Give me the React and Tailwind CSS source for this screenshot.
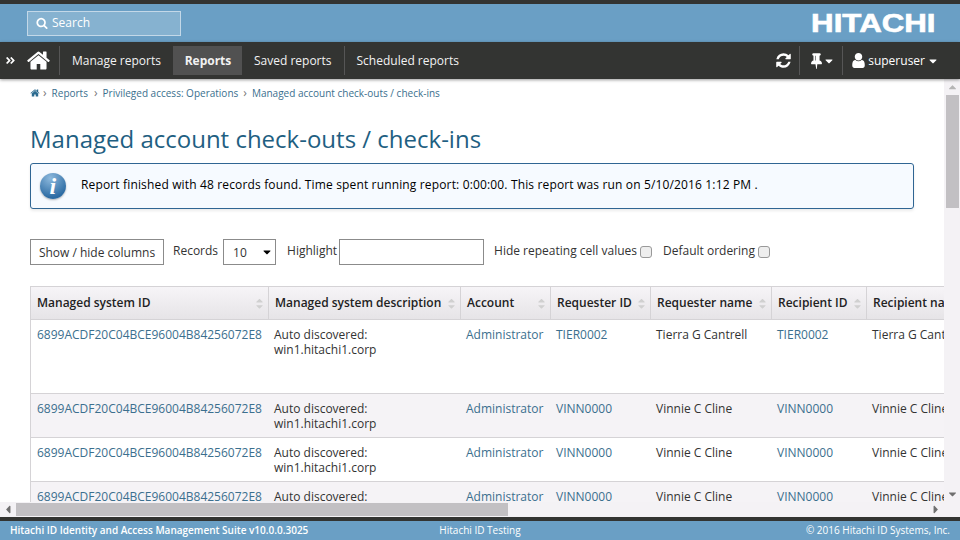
import { FaCaretDown, FaCaretUp, FaCaretLeft, FaCaretRight, FaAngleDoubleRight } from 'react-icons/fa';

const COLS = [
  { label: 'Managed system ID', w: 'w-[238px]' },
  { label: 'Managed system description', w: 'w-[192px]' },
  { label: 'Account', w: 'w-[90px]' },
  { label: 'Requester ID', w: 'w-[100px]' },
  { label: 'Requester name', w: 'w-[121px]' },
  { label: 'Recipient ID', w: 'w-[95px]' },
  { label: 'Recipient name', w: 'w-[120px]' },
];

const ROWS = [
  { id: 'TIER0002', name: 'Tierra G Cantrell', h: 'h-[74px]', bg: 'bg-white' },
  { id: 'VINN0000', name: 'Vinnie C Cline', h: 'h-[44px]', bg: 'bg-[#f5f3f6]' },
  { id: 'VINN0000', name: 'Vinnie C Cline', h: 'h-[44px]', bg: 'bg-white' },
  { id: 'VINN0000', name: 'Vinnie C Cline', h: 'h-[44px]', bg: 'bg-[#f5f3f6]' },
];

// font awesome 4 glyphs, the package only has the newer shapes
const HomeIcon = ({ className }) => (
  <svg viewBox="0 0 1792 1792" fill="currentColor" className={className}>
    <path d="M1472 992v480q0 26-19 45t-45 19h-384v-384h-256v384h-384q-26 0-45-19t-19-45v-480q0-1 .5-3t.5-3l575-474 575 474q1 2 1 6zm223-69l-62 74q-8 9-21 11h-3q-13 0-21-7l-692-577-692 577q-12 8-24 7-13-2-21-11l-62-74q-8-10-7-23.500t11-21.500l719-599q32-26 76-26t76 26l244 204v-195q0-14 9-23t23-9h192q14 0 23 9t9 23v408l219 182q10 8 11 21.500t-7 23.500z" />
  </svg>
);

const RefreshIcon = ({ className }) => (
  <svg viewBox="0 0 1792 1792" fill="currentColor" className={className}>
    <path d="M1639 1056q0 5-1 7-64 268-268 434.500t-478 166.500q-146 0-282.500-55t-243.500-157l-129 129q-19 19-45 19t-45-19-19-45v-448q0-26 19-45t45-19h448q26 0 45 19t19 45-19 45l-137 137q71 66 161 102t187 36q134 0 250-65t186-179q11-17 53-117 8-23 30-23h192q13 0 22.500 9.500t9.500 22.500zm25-800v448q0 26-19 45t-45 19h-448q-26 0-45-19t-19-45 19-45l138-138q-148-137-349-137-134 0-250 65t-186 179q-11 17-53 117-8 23-30 23h-199q-13 0-22.500-9.500t-9.500-22.500v-7q65-268 270-434.500t480-166.500q146 0 284 55.500t245 156.500l130-129q19-19 45-19t45 19 19 45z" />
  </svg>
);

const PinIcon = ({ className }) => (
  <svg viewBox="0 0 1152 1792" fill="currentColor" className={className}>
    <path d="M480 864v-448q0-14-9-23t-23-9-23 9-9 23v448q0 14 9 23t23 9 23-9 9-23zm672 352q0 26-19 45t-45 19h-429l-51 483q-2 12-10.500 20.500t-20.500 8.500h-1q-27 0-32-27l-76-485h-404q-26 0-45-19t-19-45q0-123 78.500-221.500t177.500-98.500v-512q-52 0-90-38t-38-90 38-90 90-38h640q52 0 90 38t38 90-38 90-90 38v512q99 0 177.500 98.500t78.500 221.500z" />
  </svg>
);

const UserIcon = ({ className }) => (
  <svg viewBox="256 128 1280 1536" fill="currentColor" className={className}>
    <path d="M1536 1399q0 109-62.500 187t-150.500 78h-854q-88 0-150.500-78t-62.500-187q0-85 8.500-160.500t31.500-152 58.500-131 94-89 134.500-34.500q131 128 313 128t313-128q76 0 134.500 34.500t94 89 58.500 131 31.500 152 8.500 160.500zm-256-887q0 159-112.500 271.500t-271.500 112.500-271.500-112.500-112.500-271.500 112.500-271.500 271.500-112.500 271.500 112.500 112.500 271.500z" />
  </svg>
);

const SearchIcon = ({ className }) => (
  <svg viewBox="0 0 1792 1792" fill="currentColor" className={className}>
    <path d="M1216 832q0-185-131.500-316.500t-316.500-131.500-316.500 131.500-131.500 316.500 131.500 316.500 316.500 131.500 316.500-131.500 131.500-316.500zm512 832q0 52-38 90t-90 38q-54 0-90-38l-343-342q-179 124-399 124-143 0-273.500-55.500t-225-150-150-225-55.500-273.500 55.500-273.500 150-225 225-150 273.500-55.500 273.500 55.500 225 150 150 225 55.500 273.500q0 220-124 399l343 343q37 37 37 90z" />
  </svg>
);

const Link = ({ children }) => <span className="text-[#3b6f8e]">{children}</span>;

const Divider = () => <div className="h-[29px] w-px bg-[#565656]" />;

const Crumb = ({ children }) => (
  <>
    <span className="mx-[5px] text-[12px] leading-none text-[#777]">›</span>
    <Link>{children}</Link>
  </>
);

const App = () => {
  return (
    <div className="flex h-[540px] w-[960px] flex-col overflow-hidden bg-white font-['Open_Sans',sans-serif] text-[13px] text-[#333]">
      {/* header */}
      <div className="flex h-[42px] shrink-0 items-center justify-between border-t-4 border-[#333432] bg-[#6a9fc5] pl-[27px] pr-[24px]">
        <div className="flex h-[25px] w-[154px] items-center gap-[4px] border border-[#c3d8e8] bg-[#86b2d0] pl-[8px] text-[12px] text-white">
          <SearchIcon className="h-[12px] w-[12px]" />
          <span>Search</span>
        </div>
        <span className="origin-right scale-x-[1.25] font-['Liberation_Sans',sans-serif] text-[25px] font-bold leading-none text-white [-webkit-text-stroke:0.6px_white]">HITACHI</span>
      </div>

      {/* nav */}
      <div className="z-10 flex h-[37px] shrink-0 items-center justify-between bg-[#333432] text-[12px] text-[#f2f2f2] shadow-[0_1px_3px_rgba(0,0,0,0.4)]">
        <div className="flex items-center">
          <FaAngleDoubleRight className="ml-[5px] text-[11px] text-white" />
          <HomeIcon className="ml-[10px] mr-[8px] h-[25px] w-[25px] text-white" />
          <Divider />
          <div className="flex h-[29px] items-center px-3">Manage reports</div>
          <div className="flex h-[29px] w-[69px] items-center justify-center bg-[#515151] pl-[1px] font-bold">Reports</div>
          <div className="flex h-[29px] items-center px-3">Saved reports</div>
          <Divider />
          <div className="flex h-[29px] items-center px-3">Scheduled reports</div>
        </div>
        <div className="flex items-center pr-[21px] text-white">
          <RefreshIcon className="mr-[7px] h-[17px] w-[17px]" />
          <Divider />
          <div className="ml-[11px] mr-[7px] flex items-center gap-[1px]">
            <PinIcon className="h-[17px] w-[11px]" />
            <FaCaretDown className="text-[12px]" />
          </div>
          <Divider />
          <div className="ml-[9px] flex items-center gap-[3px]">
            <UserIcon className="h-[15px] w-[13px]" />
            <span>superuser</span>
            <FaCaretDown className="ml-[-1px] text-[12px]" />
          </div>
        </div>
      </div>

      {/* page */}
      <div className="flex min-h-0 flex-1 flex-col">
        <div className="flex min-h-0 flex-1">
          <div className="min-w-0 flex-1 overflow-hidden pl-[30px]">
            <div className="mt-[6px] flex h-[16px] items-center text-[10px]">
              <HomeIcon className="mr-[-2px] h-[10px] w-[10px] text-[#2a6a8f]" />
              <Crumb>Reports</Crumb>
              <span className="ml-[1px]" />
              <Crumb>Privileged access: Operations</Crumb>
              <Crumb>Managed account check-outs / check-ins</Crumb>
            </div>

            <h1 className="mt-[21px] text-[24px] leading-[34px] text-[#1f5f82]">Managed account check-outs / check-ins</h1>

            <div className="mt-[7px] flex h-[46px] w-[884px] items-center rounded-[3px] border border-[#2f6593] bg-[#f6faff] pl-[9px] text-[12px] tracking-[0.15px] text-black shadow-[0_2px_3px_rgba(0,0,0,0.08)]">
              <div className="flex h-[26px] w-[26px] items-center justify-center rounded-full bg-[radial-gradient(circle_at_40%_20%,#8db9dd,#2c6ba3_75%)] shadow-[0_1px_2px_rgba(0,0,0,0.3)]">
                <span className="font-['Liberation_Serif',serif] text-[24px] font-bold italic leading-none text-white">i</span>
              </div>
              <span className="mb-[2px] ml-[15px]">Report finished with 48 records found. Time spent running report: 0:00:00. This report was run on 5/10/2016 1:12 PM .</span>
            </div>

            <div className="mt-[30px] flex h-[26px] items-center text-[12px]">
              <div className="flex h-[26px] w-[134px] items-center justify-center border border-[#8b8b8b] pt-[1px]">Show / hide columns</div>
              <span className="ml-[9px] mb-[3px]">Records</span>
              <div className="ml-[5px] flex h-[26px] w-[53px] items-center justify-between border border-[#8b8b8b] pl-[9px] pr-[2px]">
                <span className="pt-[2px]">10</span>
                <FaCaretDown className="text-[12px] text-black" />
              </div>
              <span className="ml-[11px] mb-[3px]">Highlight</span>
              <div className="ml-[2px] h-[26px] w-[145px] border border-[#8b8b8b]" />
              <span className="ml-[10px] mb-[3px]">Hide repeating cell values</span>
              <div className="ml-[3px] h-[12px] w-[12px] rounded-[3px] border border-[#999] bg-[#eee]" />
              <span className="ml-[11px] mb-[3px]">Default ordering</span>
              <div className="ml-[3px] h-[12px] w-[12px] rounded-[3px] border border-[#999] bg-[#eee]" />
            </div>

            <div className="mt-[21px] w-[960px] border-l border-[#d5d3d6] text-[12px]">
              <div className="flex h-[34px] border-y border-[#d5d3d6] bg-gradient-to-b from-[#f6f4f7] to-[#e6e4e7] font-semibold text-[#222]">
                {COLS.map((c) => (
                  <div key={c.label} className={`flex ${c.w} shrink-0 items-center justify-between whitespace-nowrap border-r border-[#d5d3d6] pl-[6px] pr-[3px]`}>
                    <span>{c.label}</span>
                    <span className="flex flex-col text-[#d0d0d0]">
                      <FaCaretUp className="mb-[-5px] text-[11px]" />
                      <FaCaretDown className="text-[11px]" />
                    </span>
                  </div>
                ))}
              </div>
              {ROWS.map((r, i) => (
                <div key={i} className={`flex ${r.h} ${r.bg} border-b border-[#d5d3d6] pt-[7px] leading-[15px]`}>
                  <div className="w-[238px] shrink-0 pl-[6px]"><Link>6899ACDF20C04BCE96004B84256072E8</Link></div>
                  <div className="w-[192px] shrink-0 pl-[5px]">Auto discovered:<br />win1.hitachi1.corp</div>
                  <div className="w-[90px] shrink-0 pl-[5px]"><Link>Administrator</Link></div>
                  <div className="w-[100px] shrink-0 pl-[5px]"><Link>{r.id}</Link></div>
                  <div className="w-[121px] shrink-0 pl-[5px]">{r.name}</div>
                  <div className="w-[95px] shrink-0 pl-[5px]"><Link>{r.id}</Link></div>
                  <div className="w-[120px] shrink-0 whitespace-nowrap pl-[5px]">{r.name}</div>
                </div>
              ))}
            </div>
          </div>

          {/* vertical scrollbar */}
          <div className="flex w-[16px] shrink-0 flex-col items-center bg-[#f4f2f5] text-[#6f6f6f]">
            <FaCaretUp className="mt-[2px] h-[12px] text-[13px] text-[#b5b5b5]" />
            <div className="mt-[2px] h-[113px] w-[13px] bg-[#c2c0c3]" />
            <div className="flex-1" />
            <FaCaretDown className="mb-[2px] h-[12px] text-[13px]" />
          </div>
        </div>

        {/* horizontal scrollbar */}
        <div className="flex h-[15px] shrink-0 items-center bg-[#f4f2f5] pr-[16px] text-[#6f6f6f]">
          <FaCaretLeft className="ml-[3px] w-[10px] text-[13px]" />
          <div className="ml-[3px] h-[13px] w-[492px] bg-[#c2c0c3]" />
          <div className="flex-1" />
          <FaCaretRight className="mr-[3px] w-[10px] text-[13px]" />
        </div>
      </div>

      {/* footer */}
      <div className="grid h-[23px] shrink-0 grid-cols-3 items-center border-t-4 border-[#333432] bg-[#6a9fc5] px-[10px] text-[10px] text-white">
        <span className="whitespace-nowrap font-semibold">Hitachi ID Identity and Access Management Suite v10.0.0.3025</span>
        <span className="text-center">Hitachi ID Testing</span>
        <span className="text-right">© 2016 Hitachi ID Systems, Inc.</span>
      </div>
    </div>
  );
};

export default App;
